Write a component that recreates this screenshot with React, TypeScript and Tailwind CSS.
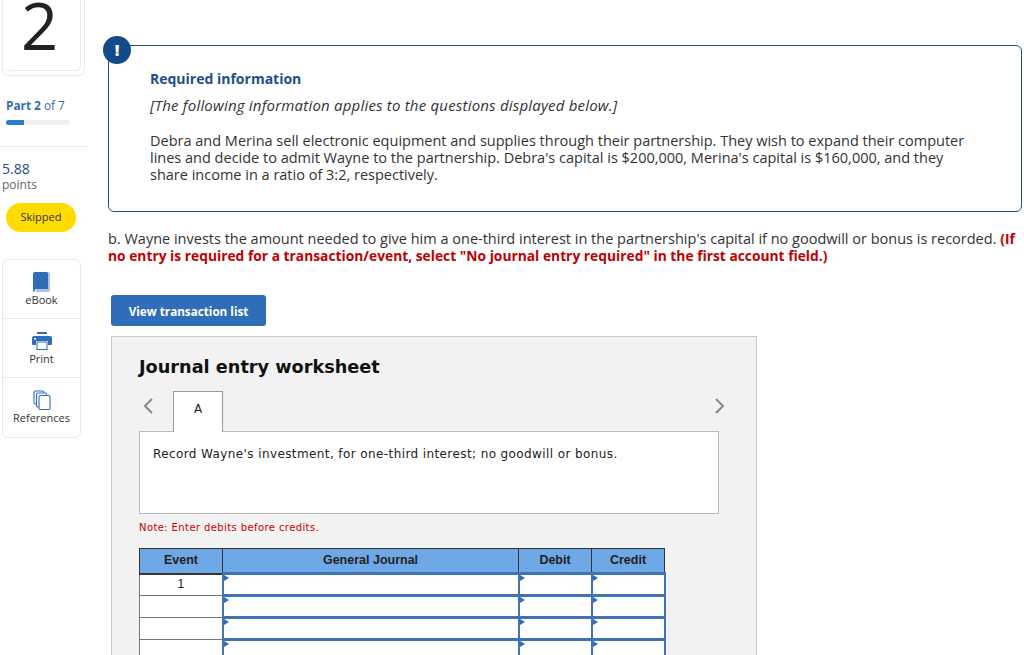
const proxima = "font-['Open_Sans',sans-serif]";

function BookIcon() {
  return (
    <svg width="18" height="20" viewBox="0 0 18 20">
      <path d="M3 0h12a2 2 0 0 1 2 2v16a2 2 0 0 1-2 2H3z" fill="#a9c4e6" />
      <path d="M2 0h11a2 2 0 0 1 2 2v15H3a1.5 1.5 0 0 0 0 3 H2a2 2 0 0 1-2-2V2a2 2 0 0 1 2-2z" fill="#2f6db8" />
    </svg>
  );
}

function PrintIcon() {
  return (
    <svg width="20" height="18" viewBox="0 0 20 18">
      <rect x="5" y="0" width="10" height="2" rx="0.5" fill="#2f6db8" />
      <path d="M2 4h16a2 2 0 0 1 2 2v6a1 1 0 0 1-1 1h-3V9H4v4H1a1 1 0 0 1-1-1V6a2 2 0 0 1 2-2z" fill="#2f6db8" />
      <rect x="5" y="10" width="10" height="7.5" fill="#fff" stroke="#2f6db8" />
      <rect x="2" y="6" width="2" height="1.5" fill="#fff" />
    </svg>
  );
}

function RefIcon() {
  return (
    <svg width="18" height="20" viewBox="0 0 18 20" fill="#fff" stroke="#2f6db8" strokeWidth="1.1">
      <rect x="1" y="1" width="10" height="13" rx="1.5" />
      <rect x="3.5" y="3" width="10" height="14" rx="1.5" />
      <rect x="6" y="5.5" width="11" height="14" rx="1.5" />
    </svg>
  );
}

function ToolRow({ icon, label, last }: { icon: React.ReactNode; label: string; last?: boolean }) {
  return (
    <div className={`flex h-[59px] flex-col items-center pt-[12px] ${last ? "" : "border-b border-[#e8e8e8]"}`}>
      <div className="flex h-[20px] items-center">{icon}</div>
      <div className="text-[11px] leading-[16px] text-[#333]">{label}</div>
    </div>
  );
}

function Sidebar() {
  return (
    <div className={`w-[88px] shrink-0 ${proxima}`}>
      <div className="ml-[2px] h-[76px] w-[83px] rounded-b-[6px] border border-t-0 border-[#ececec] pr-[3px] pb-[4px]">
        <div className="flex h-[71px] justify-center rounded-b-[6px] border-b border-r border-[#ececec] pr-[4px] pt-[5px] text-[65px] leading-[40px] text-[#222]">
          2
        </div>
      </div>
      <div className="mt-[21px] pl-[6px] text-[11.8px] leading-[16px] text-[#2f6db8]">
        <b>Part 2</b> of 7
      </div>
      <div className="ml-[6px] mt-[7px] h-[5px] w-[64px] rounded-full bg-[#efefef]">
        <div className="h-[5px] w-[18px] rounded-l-full bg-[#2a7ccb]" />
      </div>
      <div className="mt-[21px] border-t border-[#e6e6e6] pl-[2px] pt-[13px]">
        <div className="text-[14px] leading-[17px] text-[#1f4e8c]">5.88</div>
        <div className="text-[12px] leading-[15px] text-[#666]">points</div>
      </div>
      <div className="ml-[6px] mt-[11px] flex h-[29px] w-[70px] items-center justify-center rounded-full bg-[#ffdb00] text-[11px] text-[#333]">
        Skipped
      </div>
      <div className="ml-[2px] mt-[27px] w-[79px] rounded-[6px] border border-[#e8e8e8]">
        <ToolRow icon={<BookIcon />} label="eBook" />
        <ToolRow icon={<PrintIcon />} label="Print" />
        <ToolRow icon={<RefIcon />} label="References" last />
      </div>
    </div>
  );
}

function InputCell() {
  return (
    <td className="relative h-[22px] border-x-2 border-y-[3px] border-[#3f73b5] bg-white p-0">
      <span className="absolute left-0 top-0 h-0 w-0 border-y-[3.5px] border-l-[5px] border-y-transparent border-l-[#2f6db8]" />
    </td>
  );
}

function JournalTable() {
  const events = ["1", "", "", ""];
  return (
    <table className="w-[525px] table-fixed border-collapse font-['Liberation_Sans',sans-serif] text-[12.5px] text-[#222]">
      <colgroup>
        <col className="w-[83px]" />
        <col className="w-[296px]" />
        <col className="w-[73px]" />
        <col className="w-[73px]" />
      </colgroup>
      <thead>
        <tr className="h-[25px] bg-[#6fa8e6] font-bold">
          {["Event", "General Journal", "Debit", "Credit"].map((h) => (
            <th key={h} className="border border-[#333] border-b-2 p-0 text-center font-bold">
              {h}
            </th>
          ))}
        </tr>
      </thead>
      <tbody>
        {events.map((ev, i) => (
          <tr key={i} className="h-[22px]">
            <td className="border border-[#777] bg-white p-0 pb-[2px] text-center text-[12px]">{ev}</td>
            <InputCell />
            <InputCell />
            <InputCell />
          </tr>
        ))}
      </tbody>
    </table>
  );
}

function Worksheet() {
  return (
    <div className="ml-[3px] mt-[10px] h-[340px] w-[646px] border border-[#ccc] bg-[#f2f2f2] pl-[27px] pt-[20px] font-['DejaVu_Sans',sans-serif]">
      <div className="text-[17.7px] font-bold leading-[21px] text-[#111]">Journal entry worksheet</div>
      <div className="mt-[13px] flex h-[40px] w-[587px] items-start">
        <svg width="12" height="18" viewBox="0 0 12 18" fill="none" stroke="#888" strokeWidth="2" className="ml-[3px] mt-[6px]">
          <path d="M10 2 3 9l7 7" />
        </svg>
        <div className="ml-[19px] flex h-[41px] w-[50px] items-center justify-center border border-b-0 border-[#999] bg-white pb-[6px] text-[12px] text-[#222]">
          A
        </div>
        <svg width="12" height="18" viewBox="0 0 12 18" fill="none" stroke="#888" strokeWidth="2" className="ml-auto mt-[6px]">
          <path d="M2 2l7 7-7 7" />
        </svg>
      </div>
      <div className="h-[83px] w-[580px] border border-[#bbb] bg-white pl-[13px] pt-[14px] text-[12px] leading-[16px] tracking-[0.4px] text-[#222]">
        Record Wayne's investment, for one-third interest; no goodwill or bonus.
      </div>
      <div className="mt-[7px] text-[10px] leading-[13px] tracking-[0.4px] text-[#cc0000]">Note: Enter debits before credits.</div>
      <div className="mt-[14px]">
        <JournalTable />
      </div>
    </div>
  );
}

export default function App() {
  return (
    <div className="flex h-[655px] w-[1024px] overflow-hidden bg-white">
      <Sidebar />
      <div className={`ml-[20px] w-[914px] pt-[45px] ${proxima}`}>
        <div className="relative h-[167px] rounded-[6px] border border-[#1f4e8c] pl-[41px] pr-[40px] pt-[24px]">
          <div className="absolute -left-[6px] -top-[10px] flex h-[28px] w-[28px] items-center justify-center rounded-full bg-[#134a8a] text-[16px] font-extrabold text-white">
            !
          </div>
          <div className="text-[14px] font-bold leading-[18px] text-[#1f4e8c]">Required information</div>
          <div className="mt-[8px] text-[15px] italic leading-[18px] tracking-[0.2px] text-[#333]">
            [The following information applies to the questions displayed below.]
          </div>
          <p className="mt-[18px] text-[14.5px] leading-[17px] text-[#333]">
            Debra and Merina sell electronic equipment and supplies through their partnership. They wish to expand their computer lines and decide to admit Wayne to the partnership. Debra's capital is $200,000, Merina's capital is $160,000, and they share income in a ratio of 3:2, respectively.
          </p>
        </div>
        <p className="mt-[18px] text-[14.5px] leading-[17px] text-[#333]">
          b. Wayne invests the amount needed to give him a one-third interest in the partnership's capital if no goodwill or bonus is recorded.{" "}
          <b className="text-[13.8px] text-[#c00000]">
            (If no entry is required for a transaction/event, select "No journal entry required" in the first account field.)
          </b>
        </p>
        <button className="ml-[3px] mt-[31px] block h-[31px] w-[155px] rounded-[3px] bg-[#2f6db8] pt-[2px] text-[11.7px] font-bold text-white">
          View transaction list
        </button>
        <Worksheet />
      </div>
    </div>
  );
}
